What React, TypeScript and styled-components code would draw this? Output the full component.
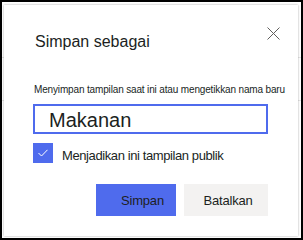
import React from 'react';
import styled, { createGlobalStyle } from 'styled-components';

const GlobalStyle = createGlobalStyle`
  html, body {
    margin: 0;
    padding: 0;
    background: #ffffff;
  }
  * {
    box-sizing: border-box;
  }
`;

const Frame = styled.div`
  width: 303px;
  height: 240px;
  border: 2px solid #000000;
  padding: 3px 3px 2px 2px;
  background-color: #ffffff;
  background-image:
    linear-gradient(#e6e6e6, #e6e6e6),
    linear-gradient(#e6e6e6, #e6e6e6);
  background-repeat: no-repeat;
  background-size: 100% 1px, 100% 1px;
  background-position: 0 55px, 0 98px;
  font-family: "Liberation Sans", Arial, sans-serif;
  color: #201f1e;
`;

const Dialog = styled.div`
  height: 100%;
  background: #ffffff;
  box-shadow: 0 0 2px rgba(0, 0, 0, 0.35);
  padding: 27px 28px 0 29px;
  display: flex;
  flex-direction: column;
`;

const Header = styled.div`
  display: flex;
  justify-content: space-between;
  align-items: flex-start;
`;

const Title = styled.h2`
  margin: 0 0 0 2px;
  font-size: 16px;
  line-height: 20px;
  font-weight: 400;
`;

const CloseButton = styled.button`
  border: none;
  background: none;
  padding: 0;
  margin: -5px -10px 0 0;
  width: 13px;
  height: 13px;
  display: flex;
  cursor: pointer;
`;

const FieldLabel = styled.label`
  margin-top: 32px;
  padding-left: 1px;
  font-size: 10px;
  line-height: 12px;
  white-space: nowrap;
  letter-spacing: -0.15px;
`;

const NameInput = styled.input`
  margin-top: 8px;
  width: 235px;
  height: 30px;
  border: 2px solid #4f6bed;
  border-radius: 0;
  padding: 2px 14px 0;
  font-family: "Liberation Sans", Arial, sans-serif;
  font-size: 20px;
  line-height: 24px;
  color: #201f1e;
  outline: none;
`;

const CheckRow = styled.div`
  margin-top: 9px;
  display: flex;
  align-items: flex-start;
  gap: 9px;
`;

const CheckBox = styled.span`
  width: 20px;
  height: 20px;
  background: #4f6bed;
  display: flex;
  align-items: center;
  justify-content: center;
`;

const CheckLabel = styled.span`
  padding-top: 5px;
  font-size: 13px;
  line-height: 16px;
  letter-spacing: -0.4px;
`;

const Footer = styled.div`
  margin-top: 20px;
  width: 235px;
  display: flex;
  justify-content: flex-end;
  gap: 8px;
`;

const Button = styled.button<{ $primary?: boolean }>`
  height: 32px;
  width: ${(p) => (p.$primary ? '80px' : '84px')};
  border: none;
  border-radius: 0;
  padding: 0 0 0 ${(p) => (p.$primary ? '13px' : '4px')};
  background: ${(p) => (p.$primary ? '#4f6bed' : '#f3f2f1')};
  color: #201f1e;
  font-family: "Liberation Sans", Arial, sans-serif;
  font-size: 13px;
  letter-spacing: -0.2px;
  cursor: pointer;
`;

const App = () => {
  return (
    <>
      <GlobalStyle />
      <Frame>
        <Dialog>
          <Header>
            <Title>Simpan sebagai</Title>
            <CloseButton aria-label="Tutup">
              <svg width="13" height="13" viewBox="0 0 13 13">
                <path d="M0.5 0.5 L12.5 12.5 M12.5 0.5 L0.5 12.5" stroke="#605e5c" strokeWidth="1" fill="none" />
              </svg>
            </CloseButton>
          </Header>
          <FieldLabel>Menyimpan tampilan saat ini atau mengetikkan nama baru</FieldLabel>
          <NameInput defaultValue="Makanan" readOnly />
          <CheckRow>
            <CheckBox>
              <svg width="10" height="8" viewBox="0 0 10 8">
                <path d="M0.5 4 L3.5 7 L9.5 0.8" stroke="#ffffff" strokeWidth="1" fill="none" />
              </svg>
            </CheckBox>
            <CheckLabel>Menjadikan ini tampilan publik</CheckLabel>
          </CheckRow>
          <Footer>
            <Button $primary>Simpan</Button>
            <Button>Batalkan</Button>
          </Footer>
        </Dialog>
      </Frame>
    </>
  );
};

export default App;
